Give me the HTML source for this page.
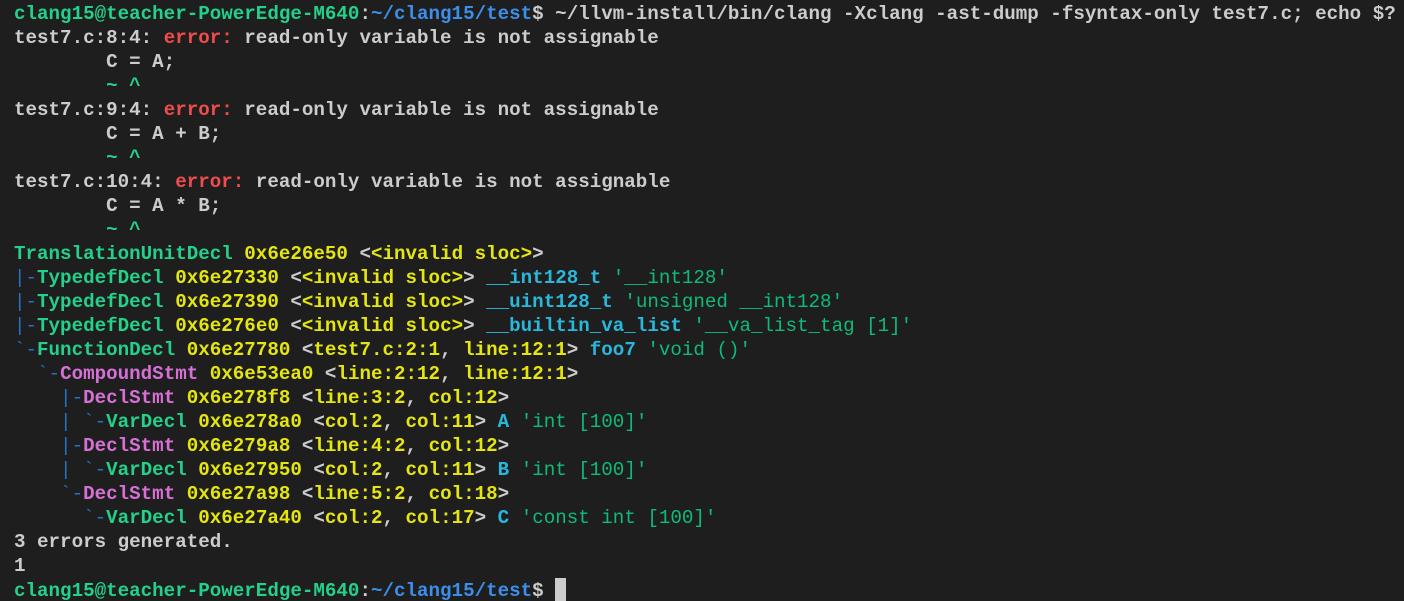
<!DOCTYPE html>
<html><head><meta charset="utf-8"><style>
html,body{margin:0;padding:0;background:#1e1e1e;width:1404px;height:601px;overflow:hidden}
pre{margin:0;padding:2px 0 0 14px;font-family:"Liberation Mono","DejaVu Sans Mono",monospace;font-size:19.2px;line-height:24px;color:#cccccc;font-weight:bold;white-space:pre}
.g{color:#23d18b}.b{color:#3b8eea}.r{color:#f14c4c}.y{color:#e5e510}.t{color:#2472c8;font-weight:normal}.c{color:#29b8db}.m{color:#d670d6}.s{color:#0dbc79;font-weight:normal}.w{color:#cccccc}
.cur{display:inline-block;width:11px;height:23px;background:#cccccc;vertical-align:-5px}
</style></head><body><pre><span class="g">clang15@teacher-PowerEdge-M640</span>:<span class="b">~/clang15/test</span>$ ~/llvm-install/bin/clang -Xclang -ast-dump -fsyntax-only test7.c; echo $?
test7.c:8:4: <span class="r">error:</span> read-only variable is not assignable
        C = A;
<span class="g">        ~ ^</span>
test7.c:9:4: <span class="r">error:</span> read-only variable is not assignable
        C = A + B;
<span class="g">        ~ ^</span>
test7.c:10:4: <span class="r">error:</span> read-only variable is not assignable
        C = A * B;
<span class="g">        ~ ^</span>
<span class="g">TranslationUnitDecl</span> <span class="y">0x6e26e50</span> &lt;<span class="y">&lt;invalid sloc&gt;</span>&gt;
<span class="t">|-</span><span class="g">TypedefDecl</span> <span class="y">0x6e27330</span> &lt;<span class="y">&lt;invalid sloc&gt;</span>&gt; <span class="c">__int128_t</span> <span class="s">'__int128'</span>
<span class="t">|-</span><span class="g">TypedefDecl</span> <span class="y">0x6e27390</span> &lt;<span class="y">&lt;invalid sloc&gt;</span>&gt; <span class="c">__uint128_t</span> <span class="s">'unsigned __int128'</span>
<span class="t">|-</span><span class="g">TypedefDecl</span> <span class="y">0x6e276e0</span> &lt;<span class="y">&lt;invalid sloc&gt;</span>&gt; <span class="c">__builtin_va_list</span> <span class="s">'__va_list_tag [1]'</span>
<span class="t">`-</span><span class="g">FunctionDecl</span> <span class="y">0x6e27780</span> &lt;<span class="y">test7.c:2:1</span>, <span class="y">line:12:1</span>&gt; <span class="c">foo7</span> <span class="s">'void ()'</span>
<span class="t">  `-</span><span class="m">CompoundStmt</span> <span class="y">0x6e53ea0</span> &lt;<span class="y">line:2:12</span>, <span class="y">line:12:1</span>&gt;
<span class="t">    |-</span><span class="m">DeclStmt</span> <span class="y">0x6e278f8</span> &lt;<span class="y">line:3:2</span>, <span class="y">col:12</span>&gt;
<span class="t">    | `-</span><span class="g">VarDecl</span> <span class="y">0x6e278a0</span> &lt;<span class="y">col:2</span>, <span class="y">col:11</span>&gt; <span class="c">A</span> <span class="s">'int [100]'</span>
<span class="t">    |-</span><span class="m">DeclStmt</span> <span class="y">0x6e279a8</span> &lt;<span class="y">line:4:2</span>, <span class="y">col:12</span>&gt;
<span class="t">    | `-</span><span class="g">VarDecl</span> <span class="y">0x6e27950</span> &lt;<span class="y">col:2</span>, <span class="y">col:11</span>&gt; <span class="c">B</span> <span class="s">'int [100]'</span>
<span class="t">    `-</span><span class="m">DeclStmt</span> <span class="y">0x6e27a98</span> &lt;<span class="y">line:5:2</span>, <span class="y">col:18</span>&gt;
<span class="t">      `-</span><span class="g">VarDecl</span> <span class="y">0x6e27a40</span> &lt;<span class="y">col:2</span>, <span class="y">col:17</span>&gt; <span class="c">C</span> <span class="s">'const int [100]'</span>
3 errors generated.
1
<span class="g">clang15@teacher-PowerEdge-M640</span>:<span class="b">~/clang15/test</span>$ <span class="cur"></span></pre></body></html>
